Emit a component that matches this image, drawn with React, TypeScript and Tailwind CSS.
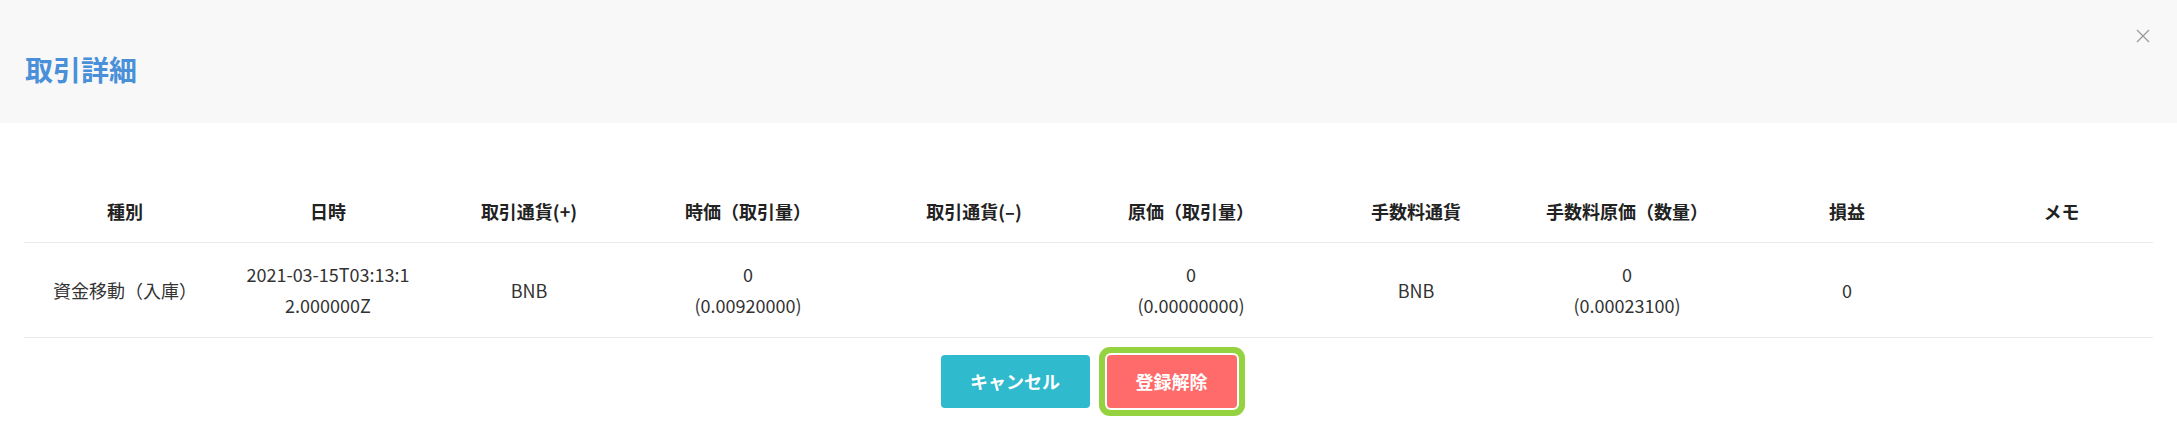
import React from 'react';

const font = { fontFamily: '"Noto Sans CJK JP", "Noto Sans", sans-serif' };

const columns = [
  '種別',
  '日時',
  '取引通貨(+)',
  '時価（取引量）',
  '取引通貨(–)',
  '原価（取引量）',
  '手数料通貨',
  '手数料原価（数量）',
  '損益',
  'メモ',
];

const row: React.ReactNode[] = [
  '資金移動（入庫）',
  '2021-03-15T03:13:12.000000Z',
  'BNB',
  <>0<br />(0.00920000)</>,
  '',
  <>0<br />(0.00000000)</>,
  'BNB',
  <>0<br />(0.00023100)</>,
  '0',
  '',
];

const grid =
  'grid grid-cols-[202px_204px_198px_240px_212px_222px_228px_194px_246px_1fr]';

const App: React.FC = () => {
  return (
    <div className="min-h-screen bg-white text-[#333]" style={font}>
      {/* Modal header */}
      <div className="h-[123px] bg-[#f8f8f8] flex items-start justify-between pl-[25px] pr-[27px]">
        <h1 className="mt-[47px] text-[28px] leading-[44px] font-bold text-[#4a90d9]">取引詳細</h1>
        <button className="mt-[29px] w-[14px] h-[14px] text-[#9a9a9a]">
          <svg viewBox="0 0 14 14" className="w-[14px] h-[14px]" fill="none" stroke="currentColor" strokeWidth="1.3">
            <path d="M1 1 L13 13 M13 1 L1 13" />
          </svg>
        </button>
      </div>

      {/* Table */}
      <div className="px-6 pt-[58px]">
        <div className={`${grid} border-b border-[#e8eaee]`}>
          {columns.map((c) => (
            <div key={c} className="px-4 py-[15px] text-center text-[18px] leading-[31px] font-bold text-[#222]">
              {c}
            </div>
          ))}
        </div>
        <div className={`${grid} border-b border-[#e8eaee]`}>
          {row.map((c, i) => (
            <div
              key={i}
              className="px-4 py-4 text-center text-[18px] leading-[31px] flex items-center justify-center break-all"
            >
              <span>{c}</span>
            </div>
          ))}
        </div>
      </div>

      {/* Actions */}
      <div className="flex justify-center gap-[17px] pt-[17px]">
        <button className="w-[149px] h-[53px] rounded-[4px] bg-[#2fbacd] text-white text-[18px] font-bold">
          キャンセル
        </button>
        <button className="w-[130px] h-[53px] rounded-[4px] bg-[#ff6b6b] text-white text-[18px] font-bold ring-[6px] ring-[#94d33f] ring-offset-2 ring-offset-white">
          登録解除
        </button>
      </div>
    </div>
  );
};

export default App;
